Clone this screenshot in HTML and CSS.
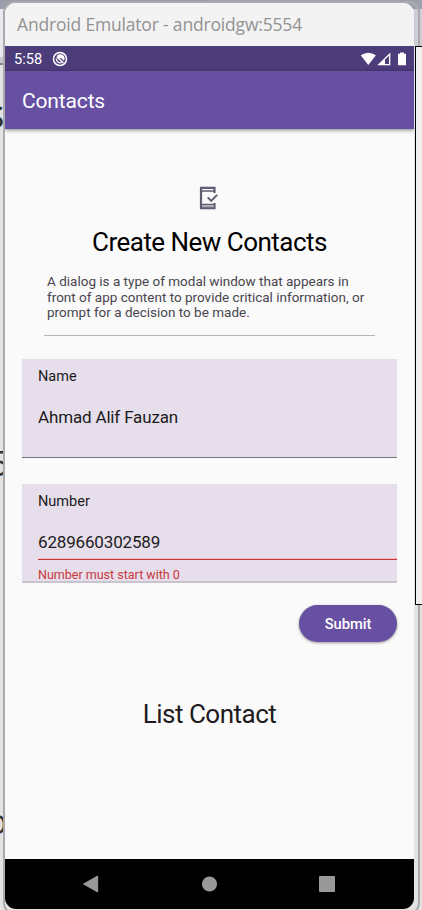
FILE: index.html
```html
<!DOCTYPE html>
<html lang="en">
<head>
<meta charset="utf-8">
<title>Contacts</title>
<link rel="stylesheet" href="styles.css">
</head>
<body>
<div class="desktop">
  <div class="left-top"></div>
  <div class="left-line"></div>
  <span class="glyph glyph-a">S</span>
  <span class="glyph glyph-b">5</span>
  <span class="glyph glyph-c">o</span>
  <div class="right-top"></div>
  <div class="right-panel"></div>
</div>
<main class="window">
  <header class="titlebar"><span>Android Emulator - androidgw:5554</span></header>
  <div class="statusbar">
    <span class="clock">5:58</span>
    <svg class="notif" viewBox="0 0 16 16"><circle cx="8" cy="8" r="6.500" fill="none" stroke="#fff" stroke-width="1.500"/><path d="M4.600 5.200A4.300 4.300 0 0 1 12 9.800L8.800 6.800 7.600 8z" fill="#fff"/><path d="M4.300 7.500a4 4 0 0 0 5.500 4" fill="none" stroke="#fff" stroke-width="1.300"/><path d="M5 6l6.300 5.900" stroke="#fff" stroke-width="1.500"/></svg>
    <svg class="signals" viewBox="0 0 48 16"><path d="M.7 4.300Q8.300-.900 15.900 4.300L8.300 14z" fill="#fff"/><path d="M17.300 14.300L30.300 1.600v12.700z" fill="#fff"/><path d="M25 8.500l4-3.800V13h-4z" fill="#4d3c7a"/><path d="M38 2.700h2V1.500h4v1.200h2V14.300h-8z" fill="#fff"/></svg>
  </div>
  <div class="appbar"><h1>Contacts</h1></div>
  <section class="content">
    <svg class="phone-icon" viewBox="0 0 20 24"><path d="M15.500 7V1.900H2V22.100H15.500V17" fill="none" stroke="#625b71" stroke-width="2.200"/><path d="M2 4.900H15.500M2 18.500H15.500" stroke="#625b71" stroke-width="1.500"/><path d="M3 19.300h12v2H3z" fill="#aaa6b2"/><path d="M8.700 11.400l3.500 3.500 6-6" fill="none" stroke="#625b71" stroke-width="2"/></svg>
    <h2>Create New Contacts</h2>
    <p class="intro">A dialog is a type of modal window that appears in<br>front of app content to provide critical information, or<br>prompt for a decision to be made.</p>
    <div class="divider"></div>
    <div class="field">
      <div class="label">Name</div>
      <div class="value">Ahmad Alif Fauzan</div>
    </div>
    <div class="field invalid">
      <div class="label">Number</div>
      <div class="value">6289660302589</div>
      <div class="error">Number must start with 0</div>
    </div>
    <button class="submit">Submit</button>
    <h3>List Contact</h3>
  </section>
  <nav class="navbar">
    <svg viewBox="0 0 18 18"><path d="M1.500 9L15.700 1v16z" fill="#999" stroke="#999" stroke-linejoin="round"/></svg>
    <svg viewBox="0 0 18 18"><circle cx="9.500" cy="9" r="7.600" fill="#999"/></svg>
    <svg viewBox="0 0 18 18"><rect x="1" y="1" width="16" height="16" rx="1" fill="#999"/></svg>
  </nav>
</main>
</body>
</html>
```
FILE: styles.css
```css
* { box-sizing: border-box; }
body {
  margin: 0;
  width: 422px;
  height: 910px;
  overflow: hidden;
  background: #e3e3e4;
  font-family: Roboto, "Liberation Sans", sans-serif;
  color: #1d1b20;
}
h1, h2, h3, p { margin: 0; font-weight: 400; }
svg { display: block; flex: none; }

.desktop { position: absolute; inset: 0; overflow: hidden; }
.left-top { position: absolute; left: 0; top: 0; width: 50%; height: 57px; background: #e9e9ee; border-top: 9px solid #9b9eaa; }
.left-line { position: absolute; left: 0; top: 57px; width: 10px; height: 8px; background: #c8c8cd; border-bottom: 2px solid #85858c; }
.right-top { position: absolute; right: 0; top: 0; width: 50%; height: 46px; background: #cdcdd5; border-top: 9px solid #9ba0ac; }
.right-panel { position: absolute; z-index: 1; left: 415px; top: 46px; width: 20px; height: 559px; background: #efefef; border: 1px solid #000; }
.glyph { position: absolute; color: #333; line-height: 1; font-family: "Open Sans", sans-serif; }
.glyph-a { left: -13px; top: 101px; font-size: 31px; font-weight: 600; }
.glyph-b { left: -11px; top: 445px; font-size: 35px; }
.glyph-c { left: -13px; top: 804px; font-size: 34px; }

.window {
  position: relative;
  display: flex;
  flex-direction: column;
  width: 409px;
  height: 906px;
  margin: 3px 0 0 5px;
  border-radius: 11px;
  overflow: hidden;
  background: #fafafa;
}
.desktop::after {
  content: "";
  position: absolute;
  left: 3px;
  top: 1px;
  width: 413px;
  height: 910px;
  border: 2px solid #ababad;
  border-radius: 12px;
}
.titlebar {
  height: 43px;
  padding-left: 12px;
  background: #f3f3f3;
  color: #929292;
  font: 17.500px/42px "Open Sans", sans-serif;
  letter-spacing: -.18px;
  white-space: nowrap;
}
.statusbar { display: flex; align-items: center; height: 25px; padding: 0 6px 0 9px; background: #4d3c7a; color: #fff; }
.clock { width: 38px; padding-top: 1px; font-size: 14.600px; line-height: 25px; }
.notif { width: 16px; height: 16px; }
.signals { width: 48px; height: 16px; margin-left: auto; }
.appbar { position: relative; height: 58px; padding-left: 17px; background: #6750a2; color: #fff; box-shadow: 0 1px 4px rgba(0, 0, 0, .5); }
.appbar h1 { font-size: 21px; line-height: 60px; letter-spacing: -.15px; }

.content { flex: 1; display: flex; flex-direction: column; padding: 57px 17px 0; }
.phone-icon { width: 20px; height: 24px; margin-left: 177px; }
h2 { margin-top: 16px; font-size: 26px; line-height: 32px; letter-spacing: -.52px; text-align: center; color: #000; }
.intro { height: 47px; margin: 16px 0 0 25px; font-size: 13.500px; line-height: 15.500px; color: #49454f; white-space: nowrap; }
.divider { height: 1px; margin: 14px 22px 0; background: #b5b5b8; }
.field { height: 99px; margin-top: 23px; padding: 8px 0 0 16px; background: #e6dfeb; border-bottom: 1px solid #79747e; }
.field.invalid { margin-top: 26px; border-bottom: 2px solid #c9c4ce; }
.label { padding-top: 1px; font-size: 14.500px; line-height: 18px; }
.value { margin-top: 16px; height: 33px; font-size: 17px; line-height: 31px; letter-spacing: -.16px; }
.invalid .value { border-bottom: 1px solid #c8383d; box-shadow: inset 0 -1px #efb9c0; }
.error { margin-top: 7px; font-size: 12.500px; line-height: 16px; color: #c8383d; }
.submit { align-self: flex-end; width: 98px; height: 37px; margin-top: 22px; padding: 1px 0 0; border: 0; border-radius: 19px; background: #6750a2; color: #fff; font: 500 14.700px/36px Roboto, sans-serif; box-shadow: 0 1px 3px rgba(0, 0, 0, .4); }
h3 { margin-top: 56px; font-size: 26px; line-height: 32px; letter-spacing: -.5px; text-align: center; }
.navbar { display: flex; align-items: center; justify-content: space-between; height: 50px; padding: 0 78px 0 77px; background: #000; }
.navbar svg { width: 18px; height: 18px; }
```
